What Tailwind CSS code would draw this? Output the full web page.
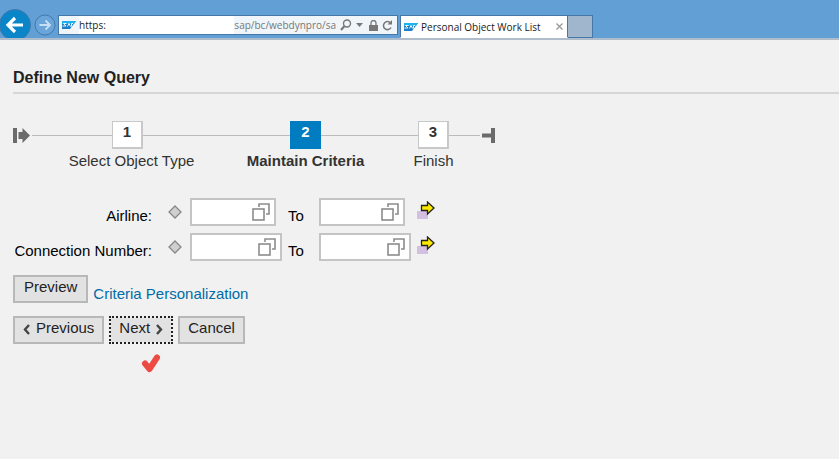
<!DOCTYPE html>
<html lang="en">
    <head>
        <meta charset="UTF-8">
        <meta name="viewport" content="width=device-width, initial-scale=1.0">
        <title>Personal Object Work List</title>
        <script src="https://cdn.jsdelivr.net/npm/@tailwindcss/browser@4"></script>
    </head>
    <body class="min-h-screen overflow-x-hidden bg-[#f1f1f1] text-[15px] leading-5 text-[#333] font-['Liberation_Sans',Arial,sans-serif]">

        <!-- shared icons -->
        <svg class="hidden">
            <symbol id="sap" viewBox="0 0 14 8">
                <path d="M0 0h14L8 8H0z" fill="#1c7fc8"/>
                <path d="M0 0h14l-2 3H0z" fill="#1fb0ee"/>
                <path d="M4.500 2.500H1.500L4 5H.500M5.500 5.500l1.500-3 1.500 3M9.500 5.500v-3h1.500" fill="none" stroke="#fff" stroke-width=".9"/>
            </symbol>
            <symbol id="valuehelp" viewBox="0 0 18 18">
                <path d="M7 4V1h10v10h-3" fill="none" stroke="#8c8c8c" stroke-width="1.600"/>
                <rect x="1" y="6" width="11" height="11" fill="#fff" stroke="#8c8c8c" stroke-width="1.600"/>
            </symbol>
            <symbol id="diamond" viewBox="0 0 14 14">
                <path d="M7 1l6 6-6 6-6-6z" fill="#d0d0d0" stroke="#888" stroke-width="1.300"/>
            </symbol>
            <symbol id="multi" viewBox="0 0 18 18">
                <path d="M0 10h11v8H0z" fill="#d3bfe0"/>
                <path d="M4.500 4.500h6V1l6.500 6-6.500 6V9.500h-6z" fill="#fde800" stroke="#222" stroke-width="1.300"/>
            </symbol>
        </svg>

        <!-- browser bar -->
        <header class="flex h-10 items-start overflow-hidden border-b-2 border-[#aebccb] bg-[#629fd5] text-[10px] leading-4 text-[#222] font-['Open_Sans','Noto_Sans',sans-serif]">
            <button class="mt-[9px] shrink-0" aria-label="Back">
                <svg class="block h-8 w-8" viewBox="0 0 32 32">
                    <circle cx="15" cy="16" r="15.500" fill="#0a86c8" stroke="#3f78ad"/>
                    <path d="M23 16H9M15 9l-7 7 7 7" fill="none" stroke="#fff" stroke-width="3.200"/>
                </svg>
            </button>
            <button class="mt-[14px] ml-[2px] shrink-0" aria-label="Forward">
                <svg class="block h-[22px] w-[22px]" viewBox="0 0 22 22">
                    <circle cx="11" cy="11" r="10" fill="#6aa5d9" stroke="#4479aa"/>
                    <path d="M5.500 11h10M11.500 6.500l4.500 4.500-4.500 4.500" fill="none" stroke="#c5dff4" stroke-width="1.800"/>
                </svg>
            </button>
            <div class="mt-[15px] ml-[2px] flex h-5 w-[340px] shrink-0 items-center border border-[#4777a8] bg-[#f0f5f9] pr-1 pl-[3px] text-[#777]">
                <svg class="h-2 w-[14px] shrink-0"><use href="#sap"/></svg>
                <input class="ml-[3px] h-[18px] min-w-0 flex-1 bg-white text-[#222] outline-none" type="text" value="https:" aria-label="Address">
                <span class="whitespace-nowrap">sap/bc/webdynpro/sa</span>
                <button class="ml-1" aria-label="Search">
                    <svg class="block h-3 w-3" viewBox="0 0 12 12" fill="none" stroke="#777"><circle cx="7" cy="4.500" r="3.500" stroke-width="1.400"/><path d="M4.500 7L1 11" stroke-width="2"/></svg>
                </button>
                <button class="ml-1" aria-label="Show history">
                    <svg class="block h-1 w-[7px]" viewBox="0 0 7 4"><path d="M0 0h7L3.500 4z" fill="#777"/></svg>
                </button>
                <svg class="ml-1.5 h-[11px] w-[9px]" viewBox="0 0 9 11"><path d="M0 5h9v6H0z" fill="#777"/><path d="M2 5V3a2.500 2.500 0 015 0v2" fill="none" stroke="#777" stroke-width="1.300"/></svg>
                <button class="ml-1" aria-label="Refresh">
                    <svg class="block h-[11px] w-[11px]" viewBox="0 0 11 11"><path d="M8.500 3A4 4 0 109 7.500" fill="none" stroke="#777" stroke-width="1.500"/><path d="M10 0v4.500H5.500z" fill="#777"/></svg>
                </button>
            </div>
            <div class="mt-[15px] ml-[2px] flex h-[23px] w-[168px] shrink-0 items-center border border-[#4777a8] border-b-white bg-white pr-1 pl-[3px]">
                <svg class="h-2 w-[14px] shrink-0"><use href="#sap"/></svg>
                <span class="ml-[3px] flex-1 whitespace-nowrap">Personal Object Work List</span>
                <button aria-label="Close tab">
                    <svg class="block h-[7px] w-[7px]" viewBox="0 0 7 7"><path d="M.500.500l6 6M6.500.500l-6 6" stroke="#999" stroke-width="1.300"/></svg>
                </button>
            </div>
            <button class="mt-[15px] h-[23px] w-[25px] shrink-0 border border-l-0 border-[#4777a8] bg-[#9fb6cd]" aria-label="New tab"></button>
        </header>

        <main class="pl-[13px]">
            <h1 class="border-b-2 border-[#d6d6d6] pt-7 pb-1 text-[16px] leading-5 font-bold text-[#222]">Define New Query</h1>

            <!-- wizard steps -->
            <section class="mt-[27px] grid grid-cols-[19px_80px_31px_147px_31px_97px_31px_33px_14px] items-center justify-start gap-y-0.5" aria-label="Steps">
                <svg class="h-[15px] w-[17px]" viewBox="0 0 17 15"><path d="M0 0h4v15H0zM5.500 4h4V0L17 7.500 9.500 15v-4h-4z" fill="#6b6b6b"/></svg>
                <span class="h-px bg-[#bbb]"></span>
                <span class="flex h-7 justify-center border border-r-2 border-b-2 border-[#c8c8c8] bg-white font-bold">1</span>
                <span class="h-px bg-[#bbb]"></span>
                <span class="flex h-7 justify-center border border-[#007cc0] bg-[#007cc0] font-bold text-white">2</span>
                <span class="h-px bg-[#bbb]"></span>
                <span class="flex h-7 justify-center border border-r-2 border-b-2 border-[#c8c8c8] bg-white font-bold">3</span>
                <span class="mr-0.5 h-px bg-[#bbb]"></span>
                <svg class="h-[15px] w-[14px]" viewBox="0 0 14 15"><path d="M0 5.500h9V0h4v15H9V9.500H0z" fill="#6b6b6b"/></svg>
                <span class="col-start-3 flex justify-center pl-2 whitespace-nowrap">Select Object Type</span>
                <strong class="col-start-5 flex justify-center whitespace-nowrap">Maintain Criteria</strong>
                <span class="col-start-7 flex justify-center whitespace-nowrap">Finish</span>
            </section>

            <form>
                <!-- selection criteria -->
                <div class="mt-[27px] grid grid-cols-[139px_38px_92px_37px_92px_24px] justify-start gap-y-[7px] text-black">
                    <label class="pt-2 text-right whitespace-nowrap" for="airline-from">Airline:</label>
                    <button class="flex justify-center pt-[7px] pl-2" type="button" aria-label="Airline options">
                        <svg class="h-[14px] w-[14px]"><use href="#diamond"/></svg>
                    </button>
                    <div class="flex h-7 w-[86px] items-center border-2 border-[#c4c4c4] bg-white pr-1">
                        <input class="min-w-0 flex-1 px-1 outline-none" type="text" id="airline-from">
                        <button type="button" aria-label="Airline value help"><svg class="block h-[18px] w-[18px]"><use href="#valuehelp"/></svg></button>
                    </div>
                    <label class="pt-2 pl-1.5" for="airline-to">To</label>
                    <div class="flex h-7 w-[86px] items-center border-2 border-[#c4c4c4] bg-white pr-1">
                        <input class="min-w-0 flex-1 px-1 outline-none" type="text" id="airline-to">
                        <button type="button" aria-label="Airline to value help"><svg class="block h-[18px] w-[18px]"><use href="#valuehelp"/></svg></button>
                    </div>
                    <button class="pl-1.5 pb-1" type="button" aria-label="Airline multiple selection"><svg class="block h-[18px] w-[18px]"><use href="#multi"/></svg></button>

                    <label class="pt-2 text-right whitespace-nowrap" for="connection-from">Connection Number:</label>
                    <button class="flex justify-center pt-[7px] pl-2" type="button" aria-label="Connection number options">
                        <svg class="h-[14px] w-[14px]"><use href="#diamond"/></svg>
                    </button>
                    <div class="flex h-7 items-center border-2 border-[#c4c4c4] bg-white pr-1">
                        <input class="min-w-0 flex-1 px-1 outline-none" type="text" id="connection-from">
                        <button type="button" aria-label="Connection number value help"><svg class="block h-[18px] w-[18px]"><use href="#valuehelp"/></svg></button>
                    </div>
                    <label class="pt-2 pl-1.5" for="connection-to">To</label>
                    <div class="flex h-7 items-center border-2 border-[#c4c4c4] bg-white pr-1">
                        <input class="min-w-0 flex-1 px-1 outline-none" type="text" id="connection-to">
                        <button type="button" aria-label="Connection number to value help"><svg class="block h-[18px] w-[18px]"><use href="#valuehelp"/></svg></button>
                    </div>
                    <button class="pl-1.5 pb-1" type="button" aria-label="Connection number multiple selection"><svg class="block h-[18px] w-[18px]"><use href="#multi"/></svg></button>
                </div>

                <div class="mt-[14px] flex h-7 items-start gap-[5px]">
                    <button class="h-7 border-2 border-[#b8b8b8] bg-[#e2e2e2] px-[9px] pb-1 text-[#222]" type="button">Preview</button>
                    <a class="pt-[9px] text-[#006ca7]" href="#">Criteria Personalization</a>
                </div>

                <!-- navigation -->
                <div class="mt-[13px] flex gap-[5px] text-[#222]">
                    <button class="flex h-7 items-start gap-1.5 border-2 border-[#b8b8b8] bg-[#e2e2e2] px-2" type="button">
                        <svg class="mt-1.5 h-[11px] w-[7px]" viewBox="0 0 7 11"><path d="M6 1L2 5.500 6 10" fill="none" stroke="#444" stroke-width="2.400"/></svg>
                        Previous
                    </button>
                    <button class="flex h-7 items-start gap-1.5 border-2 border-dotted border-[#222] bg-[#e2e2e2] bg-clip-padding px-2" type="submit">
                        Next
                        <svg class="mt-1.5 h-[11px] w-[7px]" viewBox="0 0 7 11"><path d="M1 1l4 4.500L1 10" fill="none" stroke="#444" stroke-width="2.400"/></svg>
                    </button>
                    <button class="h-7 border-2 border-[#b8b8b8] bg-[#e2e2e2] px-2 pb-1" type="button">Cancel</button>
                </div>
            </form>

            <svg class="mt-[10px] ml-32 h-[19px] w-5" viewBox="0 0 20 19"><path d="M4 9.500L8.500 15 16 3.500" fill="none" stroke="#ec4b42" stroke-width="6" stroke-linecap="round" stroke-linejoin="round"/></svg>
        </main>
    </body>
</html>
